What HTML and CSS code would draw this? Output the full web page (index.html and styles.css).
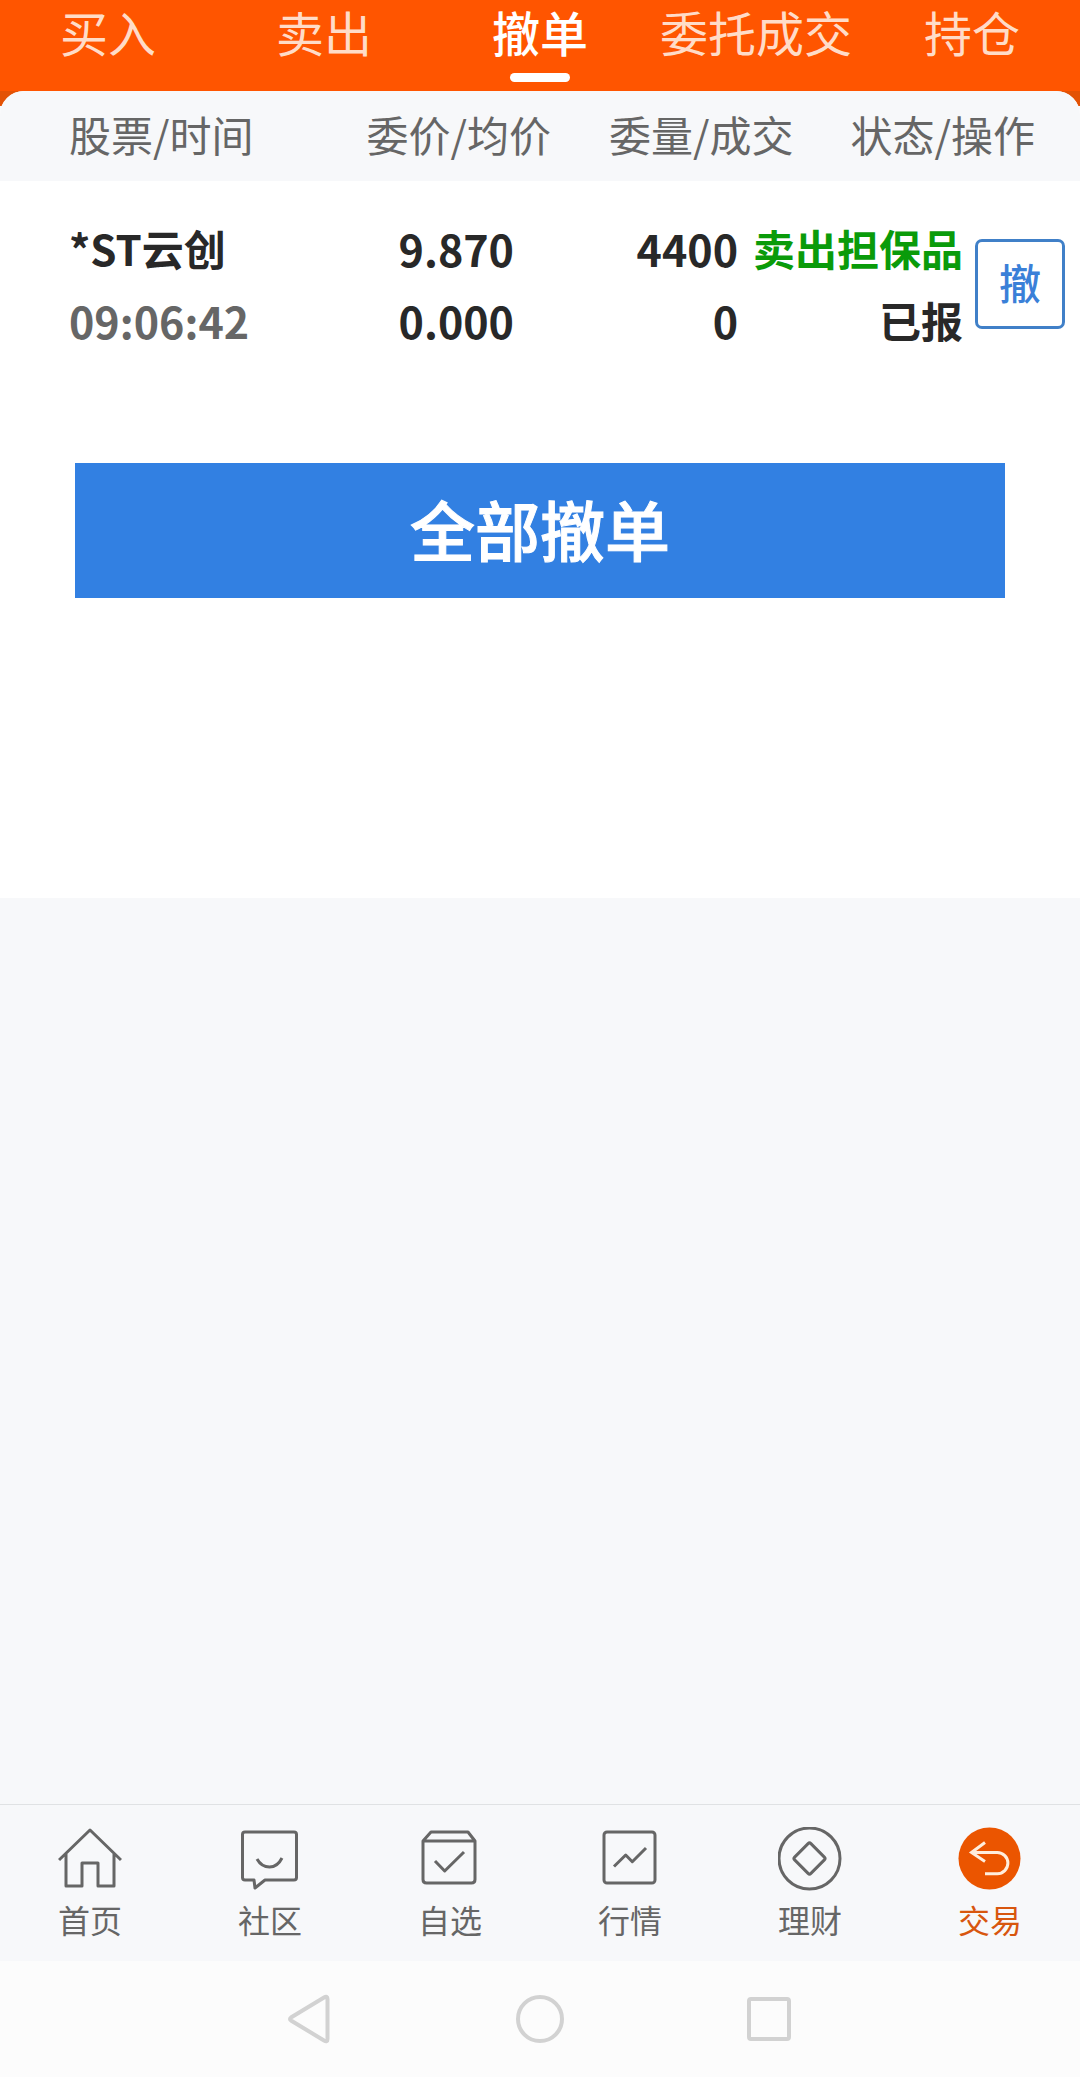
FILE: index.html
```html
<!DOCTYPE html>
<html lang="zh-CN">
<head>
<meta charset="utf-8">
<meta name="viewport" content="width=device-width, initial-scale=1">
<title>撤单</title>
<link rel="stylesheet" href="styles.css">
</head>
<body>
<header class="tabs-bar">
  <nav class="tabs">
    <a class="tab" href="#buy">买入</a>
    <a class="tab" href="#sell">卖出</a>
    <a class="tab tab-active" href="#cancel" aria-current="page">撤单</a>
    <a class="tab" href="#orders">委托成交</a>
    <a class="tab" href="#positions">持仓</a>
  </nav>
</header>
<main class="content">
  <section class="sheet">
    <table class="orders">
      <thead class="orders-head">
        <tr class="head-row">
          <th class="head-cell head-first">股票/时间</th>
          <th class="head-cell">委价/均价</th>
          <th class="head-cell">委量/成交</th>
          <th class="head-cell">状态/操作</th>
        </tr>
      </thead>
      <tbody class="orders-body">
        <tr class="order-row">
          <td class="cell cell-name"><div>*ST云创</div><div class="number muted">09:06:42</div></td>
          <td class="cell number"><div>9.870</div><div>0.000</div></td>
          <td class="cell number"><div>4400</div><div>0</div></td>
          <td class="cell cell-status">
            <div><div class="sell">卖出担保品</div><div>已报</div></div>
            <button class="cancel" type="button">撤</button>
          </td>
        </tr>
      </tbody>
    </table>
    <button class="cancel-all" type="button">全部撤单</button>
  </section>
</main>
<nav class="bottom-nav">
  <a class="nav-item" href="#home">
    <svg class="icon" viewBox="0 0 64 64"><path d="M1 33 32 3l31 30M8 27v32h16V36h16v23h16V27"/></svg>
    首页</a>
  <a class="nav-item" href="#community">
    <svg class="icon" viewBox="0 0 64 64"><path d="M7 5h49q2.500 0 2.500 2.500v43q0 2.500-2.500 2.500H27l-10 8-1-8H7q-2.500 0-2.500-2.500v-43Q4.500 5 7 5ZM19 32q4.500 8 12.500 8T44 31"/></svg>
    社区</a>
  <a class="nav-item" href="#watchlist">
    <svg class="icon" viewBox="0 0 64 64"><path d="M5 14l8-9h37l7 9v38.500q0 3.500-3.500 3.500h-45Q5 56 5 52.500ZM5 14h52M17 34l9.700 10L46 25"/></svg>
    自选</a>
  <a class="nav-item" href="#market">
    <svg class="icon" viewBox="0 0 64 64"><rect x="6" y="5" width="51" height="51" rx="3"/><path d="M16 39.500 27.700 28l6.600 6.700L48 21"/></svg>
    行情</a>
  <a class="nav-item" href="#wealth">
    <svg class="icon" viewBox="0 0 64 64"><circle cx="31.500" cy="31.500" r="30.500"/><rect x="20" y="20" width="23" height="23" rx="2" transform="rotate(45 31.500 31.500)"/></svg>
    理财</a>
  <a class="nav-item nav-active" href="#trade" aria-current="page">
    <svg class="icon" viewBox="0 0 64 64"><circle class="disc" cx="31.500" cy="31.500" r="31"/><path class="arrow" d="M27 15.500 13.500 25.500 27 34.500M14 25.500h25.300a10.600 10.600 0 0 1 0 21.200H27"/></svg>
    交易</a>
</nav>
<footer class="system-bar">
  <button class="system-key" type="button" aria-label="返回"><svg class="system-icon" viewBox="0 0 50 50"><path d="M39 3.500Q42.500 1.500 42.500 5v40Q42.500 48.500 39 46.500L6 26.500Q4 25 6 23.500Z"/></svg></button>
  <button class="system-key" type="button" aria-label="主屏幕"><svg class="system-icon" viewBox="0 0 50 50"><circle cx="25" cy="25" r="22"/></svg></button>
  <button class="system-key" type="button" aria-label="最近任务"><svg class="system-icon" viewBox="0 0 50 50"><rect x="4" y="5" width="40" height="40" rx="2"/></svg></button>
</footer>
</body>
</html>
```
FILE: styles.css
```css
* {
  box-sizing: border-box;
}

body {
  display: flex;
  flex-direction: column;
  min-height: 100vh;
  margin: 0;
  background: #f7f8fa;
  color: #282828;
  font-family: "Noto Sans CJK SC", sans-serif;
  font-size: 42px;
}

a {
  text-decoration: none;
}

button {
  padding: 0;
  font-family: inherit;
}

/* Top tabs */
.tabs-bar {
  background: #ff5500;
}

.tabs {
  display: grid;
  grid-template-columns: repeat(5, 1fr);
  height: 91px;
}

.tab {
  display: flex;
  flex-direction: column;
  align-items: center;
  color: #ffdcc8;
  font-size: 48px;
  line-height: 62px;
  white-space: nowrap;
}

.tab-active {
  color: #fff;
  font-weight: 500;
}

.tab-active::after {
  content: "";
  width: 60px;
  height: 9px;
  margin-top: 11px;
  border-radius: 5px;
  background: #fff;
}

.content {
  flex: 1;
  background: linear-gradient(#e35205 15px, #f7f8fa 15px);
}

/* Order list */
.sheet {
  padding-bottom: 300px;
  border-radius: 24px 24px 0 0;
  background: #fff;
}

.orders,
.orders-head,
.orders-body {
  display: block;
}

.head-row {
  display: grid;
  grid-template-columns: 338fr 240fr 244fr 238fr;
  padding: 0 18px 4px 0;
  border-radius: 24px 24px 0 0;
  background: #f7f8fa;
}

.head-cell {
  padding: 0;
  color: #666;
  font-weight: 400;
  line-height: 86px;
  text-align: center;
  white-space: nowrap;
}

.head-first {
  padding-left: 69px;
  text-align: left;
}

.order-row {
  display: grid;
  grid-template-columns: 340fr 174fr 224fr 327fr;
  padding: 31px 15px 45px 0;
}

.cell {
  padding: 0;
  font-weight: 700;
  line-height: 72px;
  text-align: right;
  white-space: nowrap;
}

.cell-name {
  padding-left: 69px;
  text-align: left;
}

.cell-status {
  display: flex;
  align-items: center;
  justify-content: flex-end;
  gap: 12px;
}

.number {
  font-size: 43px;
}

.muted {
  color: #666;
}

.sell {
  color: #0a9b0a;
}

.cancel {
  width: 90px;
  height: 90px;
  padding-bottom: 4px;
  border: 3px solid #4080c8;
  border-radius: 7px;
  background: #fff;
  color: #3a80d8;
  font-size: 42px;
  font-weight: 500;
  line-height: 60px;
}

.cancel-all {
  display: block;
  width: calc(100% - 150px);
  height: 135px;
  margin: 62px auto 0;
  padding-bottom: 5px;
  border: 0;
  background: #3280e2;
  color: #fff;
  font-size: 65px;
  font-weight: 500;
  line-height: 90px;
  -webkit-text-stroke: 1px currentColor;
}

/* Bottom navigation */
.bottom-nav {
  display: grid;
  grid-template-columns: repeat(6, 1fr);
  padding: 22px 0;
  border-top: 1px solid #e0e2e4;
  background: #f7f8fa;
}

.nav-item {
  display: flex;
  flex-direction: column;
  align-items: center;
  gap: 8px;
  color: #666;
  font-size: 32px;
  line-height: 40px;
}

.nav-active {
  color: #d8560e;
}

.icon {
  width: 64px;
  height: 64px;
  fill: none;
  stroke: #666;
  stroke-width: 3;
  stroke-linejoin: round;
}

.disc {
  fill: #eb5500;
  stroke: none;
}

.arrow {
  stroke: #ffeedd;
  stroke-linejoin: miter;
}

/* System keys */
.system-bar {
  display: flex;
  justify-content: center;
  gap: 180px;
  padding: 33px 0;
  background: #fcfcfc;
}

.system-key {
  width: 50px;
  height: 50px;
  border: 0;
  background: none;
}

.system-icon {
  display: block;
  width: 50px;
  height: 50px;
  fill: none;
  stroke: #d2d2d2;
  stroke-width: 4;
}
```
